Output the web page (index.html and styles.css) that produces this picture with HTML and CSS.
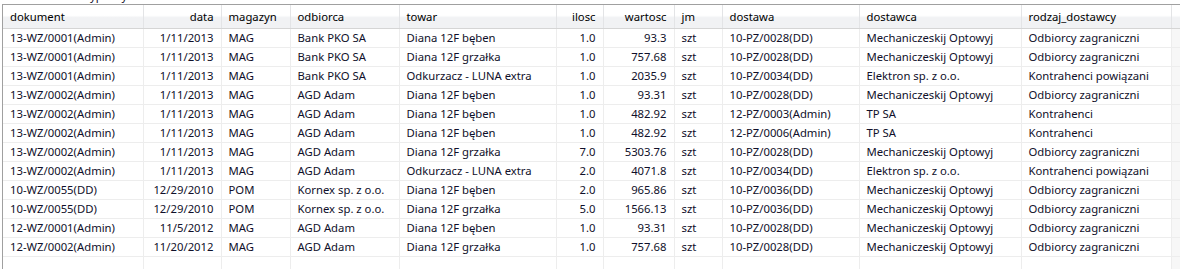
FILE: index.html
```html
<!DOCTYPE html>
<html lang="pl">
<head>
<meta charset="utf-8">
<title>Zestawienie</title>
<link rel="stylesheet" href="styles.css">
</head>
<body>
<div class="caption"><span>Zestawienie typu wydań</span></div>
<div class="grid">
<table>
<colgroup>
<col class="c-dok"><col class="c-data"><col class="c-mag"><col class="c-odb"><col class="c-tow"><col class="c-il"><col class="c-war"><col class="c-jm"><col class="c-dsa"><col class="c-dca"><col class="c-rodz"><col>
</colgroup>
<thead>
<tr><th>dokument</th><th class="r">data</th><th>magazyn</th><th>odbiorca</th><th>towar</th><th class="r">ilosc</th><th class="r">wartosc</th><th>jm</th><th>dostawa</th><th>dostawca</th><th>rodzaj_dostawcy</th><th></th></tr>
</thead>
<tbody>
<tr><td>13-WZ/0001(Admin)</td><td class="r">1/11/2013</td><td>MAG</td><td>Bank PKO SA</td><td>Diana 12F bęben</td><td class="r">1.0</td><td class="r">93.3</td><td>szt</td><td>10-PZ/0028(DD)</td><td>Mechaniczeskij Optowyj</td><td>Odbiorcy zagraniczni</td><td class="fill"></td></tr>
<tr><td>13-WZ/0001(Admin)</td><td class="r">1/11/2013</td><td>MAG</td><td>Bank PKO SA</td><td>Diana 12F grzałka</td><td class="r">1.0</td><td class="r">757.68</td><td>szt</td><td>10-PZ/0028(DD)</td><td>Mechaniczeskij Optowyj</td><td>Odbiorcy zagraniczni</td><td class="fill"></td></tr>
<tr><td>13-WZ/0001(Admin)</td><td class="r">1/11/2013</td><td>MAG</td><td>Bank PKO SA</td><td>Odkurzacz - LUNA extra</td><td class="r">1.0</td><td class="r">2035.9</td><td>szt</td><td>10-PZ/0034(DD)</td><td>Elektron sp. z o.o.</td><td>Kontrahenci powiązani</td><td class="fill"></td></tr>
<tr><td>13-WZ/0002(Admin)</td><td class="r">1/11/2013</td><td>MAG</td><td>AGD Adam</td><td>Diana 12F bęben</td><td class="r">1.0</td><td class="r">93.31</td><td>szt</td><td>10-PZ/0028(DD)</td><td>Mechaniczeskij Optowyj</td><td>Odbiorcy zagraniczni</td><td class="fill"></td></tr>
<tr><td>13-WZ/0002(Admin)</td><td class="r">1/11/2013</td><td>MAG</td><td>AGD Adam</td><td>Diana 12F bęben</td><td class="r">1.0</td><td class="r">482.92</td><td>szt</td><td>12-PZ/0003(Admin)</td><td>TP SA</td><td>Kontrahenci</td><td class="fill"></td></tr>
<tr><td>13-WZ/0002(Admin)</td><td class="r">1/11/2013</td><td>MAG</td><td>AGD Adam</td><td>Diana 12F bęben</td><td class="r">1.0</td><td class="r">482.92</td><td>szt</td><td>12-PZ/0006(Admin)</td><td>TP SA</td><td>Kontrahenci</td><td class="fill"></td></tr>
<tr><td>13-WZ/0002(Admin)</td><td class="r">1/11/2013</td><td>MAG</td><td>AGD Adam</td><td>Diana 12F grzałka</td><td class="r">7.0</td><td class="r">5303.76</td><td>szt</td><td>10-PZ/0028(DD)</td><td>Mechaniczeskij Optowyj</td><td>Odbiorcy zagraniczni</td><td class="fill"></td></tr>
<tr><td>13-WZ/0002(Admin)</td><td class="r">1/11/2013</td><td>MAG</td><td>AGD Adam</td><td>Odkurzacz - LUNA extra</td><td class="r">2.0</td><td class="r">4071.8</td><td>szt</td><td>10-PZ/0034(DD)</td><td>Elektron sp. z o.o.</td><td>Kontrahenci powiązani</td><td class="fill"></td></tr>
<tr><td>10-WZ/0055(DD)</td><td class="r">12/29/2010</td><td>POM</td><td>Kornex sp. z o.o.</td><td>Diana 12F bęben</td><td class="r">2.0</td><td class="r">965.86</td><td>szt</td><td>10-PZ/0036(DD)</td><td>Mechaniczeskij Optowyj</td><td>Odbiorcy zagraniczni</td><td class="fill"></td></tr>
<tr><td>10-WZ/0055(DD)</td><td class="r">12/29/2010</td><td>POM</td><td>Kornex sp. z o.o.</td><td>Diana 12F grzałka</td><td class="r">5.0</td><td class="r">1566.13</td><td>szt</td><td>10-PZ/0036(DD)</td><td>Mechaniczeskij Optowyj</td><td>Odbiorcy zagraniczni</td><td class="fill"></td></tr>
<tr><td>12-WZ/0001(Admin)</td><td class="r">11/5/2012</td><td>MAG</td><td>AGD Adam</td><td>Diana 12F bęben</td><td class="r">1.0</td><td class="r">93.31</td><td>szt</td><td>10-PZ/0028(DD)</td><td>Mechaniczeskij Optowyj</td><td>Odbiorcy zagraniczni</td><td class="fill"></td></tr>
<tr><td>12-WZ/0002(Admin)</td><td class="r">11/20/2012</td><td>MAG</td><td>AGD Adam</td><td>Diana 12F grzałka</td><td class="r">1.0</td><td class="r">757.68</td><td>szt</td><td>10-PZ/0028(DD)</td><td>Mechaniczeskij Optowyj</td><td>Odbiorcy zagraniczni</td><td class="fill"></td></tr>
<tr class="empty"><td></td><td></td><td></td><td></td><td></td><td></td><td></td><td></td><td></td><td></td><td></td><td class="fill"></td></tr>
</tbody>
</table>
</div>
</body>
</html>
```
FILE: styles.css
```css
html, body {
  margin: 0;
  padding: 0;
  background: #ffffff;
  overflow: hidden;
}
body {
  font-family: "Noto Sans", "Open Sans", sans-serif;
  font-size: 11.3px;
  color: #10102a;
}
.caption {
  height: 4px;
  overflow: hidden;
  padding-left: 20px;
}
.caption span {
  display: block;
  margin-top: -12px;
  line-height: 16px;
}
.grid {
  margin-left: 2px;
  border-top: 1px solid #a0a0a0;
  border-left: 1px solid #a0a0a0;
  height: 300px;
}
table {
  border-collapse: collapse;
  table-layout: fixed;
  width: 1178px;
}
.c-dok { width: 140px; }
.c-data { width: 78px; }
.c-mag { width: 69px; }
.c-odb { width: 109px; }
.c-tow { width: 157px; }
.c-il { width: 47px; }
.c-war { width: 71px; }
.c-jm { width: 48px; }
.c-dsa { width: 137px; }
.c-dca { width: 162px; }
.c-rodz { width: 150px; }
th {
  height: 23px;
  padding: 0 7px;
  text-align: left;
  font-weight: normal;
  color: #000;
  background: linear-gradient(#ffffff 0%, #ffffff 45%, #f1f2f4 55%, #f1f2f4 100%);
  border-right: 1px solid #e3e4e6;
  border-bottom: 1px solid #d5d5d5;
  white-space: nowrap;
  overflow: hidden;
}
td {
  height: 18px;
  padding: 0 7px;
  border-right: 1px solid #ededed;
  border-bottom: 1px solid #ededed;
  white-space: nowrap;
  overflow: hidden;
  line-height: 18px;
}
td.fill {
  background: #f7f7f7;
}
.r { text-align: right; }
tr.empty td {
  height: 40px;
  border-bottom: none;
}
```
